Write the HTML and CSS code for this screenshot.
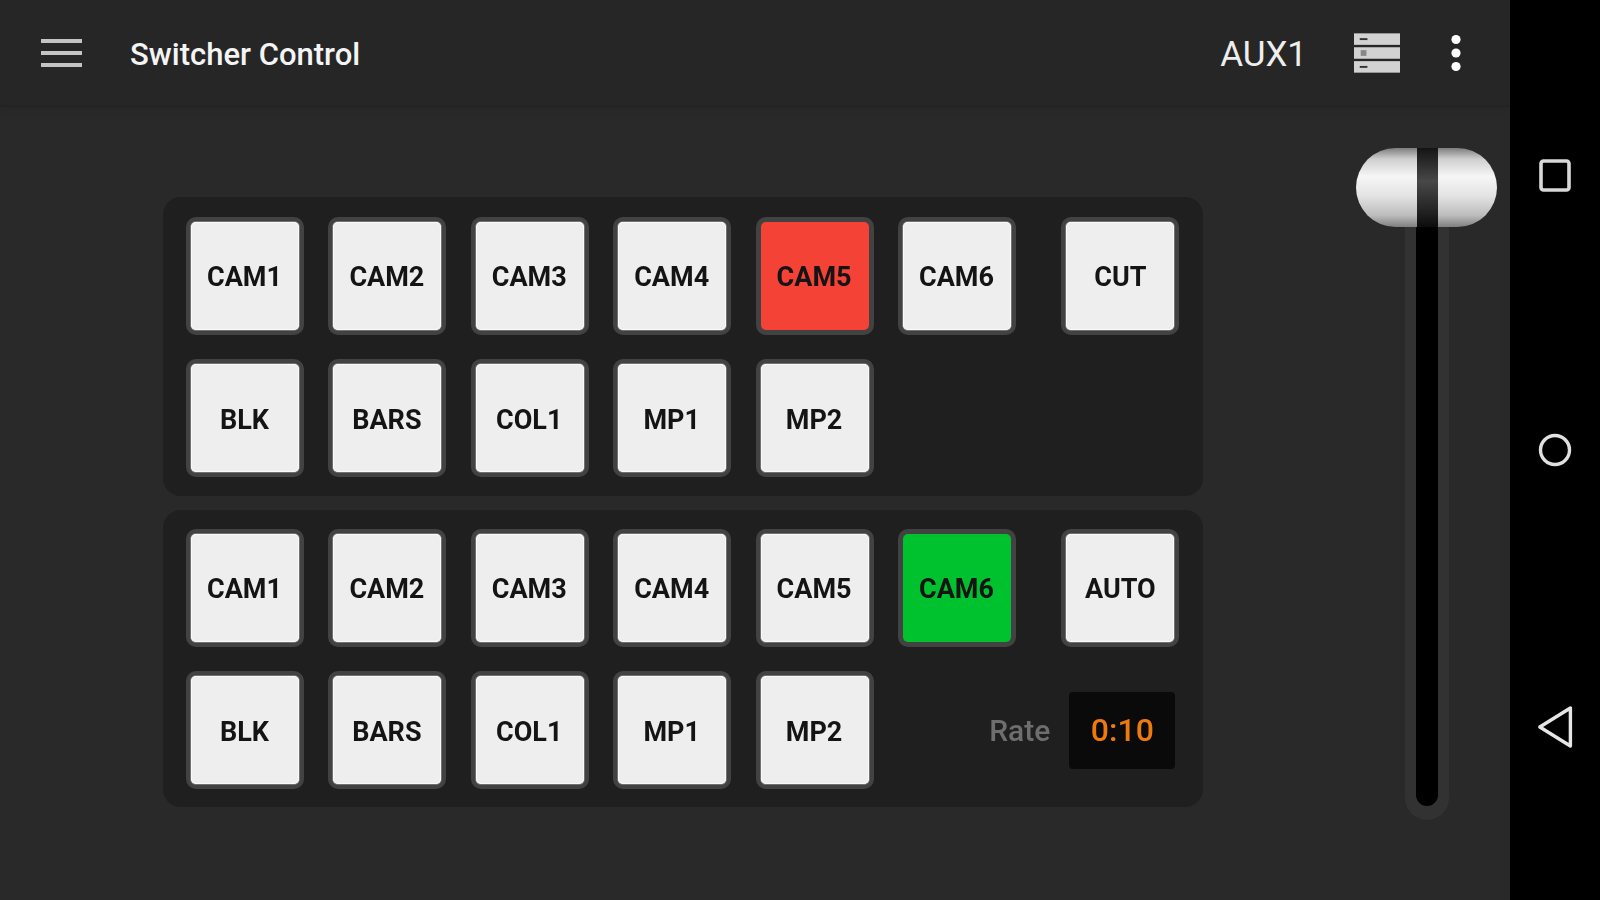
FILE: index.html
```html
<!DOCTYPE html>
<html lang="en">
<head>
<meta charset="utf-8">
<title>Switcher Control</title>
<link rel="stylesheet" href="styles.css">
</head>
<body>
<div class="app">
  <div class="main">
    <header class="topbar">
      <svg class="menu-icon" width="41" height="30" viewBox="0 0 41 30"><path d="M0 3h41M0 15h41M0 27h41" stroke="#c4c4c4" stroke-width="4" fill="none"/></svg>
      <h1 class="title">Switcher Control</h1>
      <span class="aux">AUX1</span>
      <svg class="rack-icon" width="46" height="40" viewBox="0 0 48 41">
        <rect x="0" y="0" width="48" height="12" fill="#d2d2d2"/>
        <rect x="0" y="14.5" width="48" height="12" fill="#d2d2d2"/>
        <rect x="0" y="29" width="48" height="12" fill="#d2d2d2"/>
        <rect x="6" y="5" width="8" height="2" fill="#333"/>
        <rect x="7" y="17.5" width="6" height="6" fill="#888"/>
        <rect x="6" y="34" width="8" height="2" fill="#333"/>
      </svg>
      <svg class="more-icon" width="12" height="38" viewBox="0 0 12 38"><circle cx="6" cy="5.5" r="4.6" fill="#fff"/><circle cx="6" cy="19" r="4.6" fill="#fff"/><circle cx="6" cy="32.5" r="4.6" fill="#fff"/></svg>
    </header>
    <div class="content">
      <div class="panels">
        <section class="panel">
          <button class="key">CAM1</button><button class="key">CAM2</button><button class="key">CAM3</button><button class="key">CAM4</button><button class="key key-red">CAM5</button><button class="key">CAM6</button><button class="key key-action">CUT</button>
          <button class="key">BLK</button><button class="key">BARS</button><button class="key">COL1</button><button class="key">MP1</button><button class="key">MP2</button>
        </section>
        <section class="panel">
          <button class="key">CAM1</button><button class="key">CAM2</button><button class="key">CAM3</button><button class="key">CAM4</button><button class="key">CAM5</button><button class="key key-green">CAM6</button><button class="key key-action">AUTO</button>
          <button class="key">BLK</button><button class="key">BARS</button><button class="key">COL1</button><button class="key">MP1</button><button class="key">MP2</button>
          <div class="rate"><span class="rate-label">Rate</span><span class="rate-value">0:10</span></div>
        </section>
      </div>
      <div class="fader">
        <div class="fader-slot"></div>
        <div class="fader-thumb"><div class="fader-thumb-gap"></div></div>
      </div>
    </div>
  </div>
  <nav class="navbar">
    <svg width="32" height="33" viewBox="0 0 32 33"><rect x="2" y="2" width="28" height="29" rx="2.5" fill="none" stroke="#d8d8d8" stroke-width="3.6"/></svg>
    <svg width="34" height="34" viewBox="0 0 34 34"><circle cx="17" cy="17" r="14.5" fill="none" stroke="#e0e0e0" stroke-width="3.4"/></svg>
    <svg class="nav-back" width="36" height="44" viewBox="0 0 36 44"><path d="M2.8 22 33.4 3v38z" fill="none" stroke="#e6e6e6" stroke-width="3.4" stroke-linejoin="round"/></svg>
  </nav>
</div>
</body>
</html>
```
FILE: styles.css
```css
* { box-sizing: border-box; }
html, body { margin: 0; height: 100%; background: #000; overflow: hidden; }
body { font-family: Roboto, "Liberation Sans", sans-serif; }

.app { display: flex; width: 1600px; height: 900px; filter: blur(0.6px); }
.main { width: 1510px; display: flex; flex-direction: column; background: #292929; }

.topbar {
  height: 107px;
  flex: none;
  display: flex;
  align-items: center;
  padding-left: 41px;
  background: #262626;
  border-bottom: 2px solid #232323;
  box-shadow: 0 3px 5px rgba(0,0,0,.08);
}
.menu-icon { flex: none; }
.title { margin: 4px 0 0 48px; font-size: 31px; font-weight: 500; color: #f4f4f4; line-height: 1; white-space: nowrap; }
.aux { margin: 4px 0 0 auto; font-size: 35px; color: #eee; line-height: 1; }
.rack-icon { margin-left: 47px; flex: none; }
.more-icon { margin-left: 50px; margin-right: 48px; flex: none; }

.content { flex: 1; display: flex; align-items: flex-start; padding-left: 163px; }
.panels { width: 1040px; margin-top: 90px; display: flex; flex-direction: column; gap: 14.5px; }
.panel {
  display: grid;
  grid-template-columns: repeat(7, 108px);
  grid-template-rows: 108px 108px;
  column-gap: 34.4px;
  row-gap: 34.5px;
  padding: 24.5px 27px 23.5px 28px;
  background: #1f1f1f;
  border-radius: 18px;
}
.panel + .panel { padding-top: 23.5px; padding-bottom: 22.5px; }
.key {
  width: 108px;
  height: 108px;
  padding: 3px 1px 0 0;
  border: 0;
  border-radius: 5px;
  background: #eee;
  box-shadow: 0 0 0 1px #fafafa inset, 0 0 0 1px rgba(255,255,255,.25), 0 0 0 5px #424242;
  color: #141414;
  font: 700 27px Roboto, "Liberation Sans", sans-serif;
}
.key-red { background: #f44336; box-shadow: 0 0 0 5px #424242; }
.key-green { background: #00c22e; box-shadow: 0 0 0 5px #424242; }
.key-action { margin-left: 21px; margin-right: -21px; padding-right: 0; }

.rate {
  grid-column: 6 / 8;
  display: flex;
  align-items: center;
  justify-content: flex-end;
  margin-right: -22px;
}
.rate-label { font-size: 30px; font-weight: 500; color: #6e6e6e; margin-right: 19px; }
.rate-value {
  width: 106px;
  height: 77px;
  display: flex;
  align-items: center;
  justify-content: center;
  background: #0a0a0a;
  border-radius: 4px;
  color: #ec7a0c;
  font-size: 32px;
  font-weight: 500;
}

.fader { position: relative; width: 44px; height: 672px; margin: 41px 0 0 202px; flex: none; }
.fader-slot {
  height: 100%;
  padding: 0 11px 14px;
  background: #323232;
  border-radius: 0 0 22px 22px;
}
.fader-slot::before {
  content: "";
  display: block;
  height: 100%;
  background: #000;
  border-radius: 0 0 11px 11px;
}
.fader-thumb {
  position: absolute;
  top: 0;
  left: -49px;
  width: 141px;
  height: 79px;
  display: flex;
  justify-content: center;
  border-radius: 40px;
  background: linear-gradient(#7d7d7d 0%, #cfcfcf 14%, #f6f6f6 36%, #e4e4e4 60%, #bdbdbd 85%, #808080 100%);
}
.fader-thumb-gap {
  width: 21px;
  margin-left: 1px;
  background: linear-gradient(#141414 0%, #484848 42%, #222 80%, #0c0c0c 100%);
}

.navbar {
  width: 90px;
  background: #000;
  display: flex;
  flex-direction: column;
  align-items: center;
  padding-top: 159px;
  gap: 241px;
}
.nav-back { margin-top: -3px; }
```
